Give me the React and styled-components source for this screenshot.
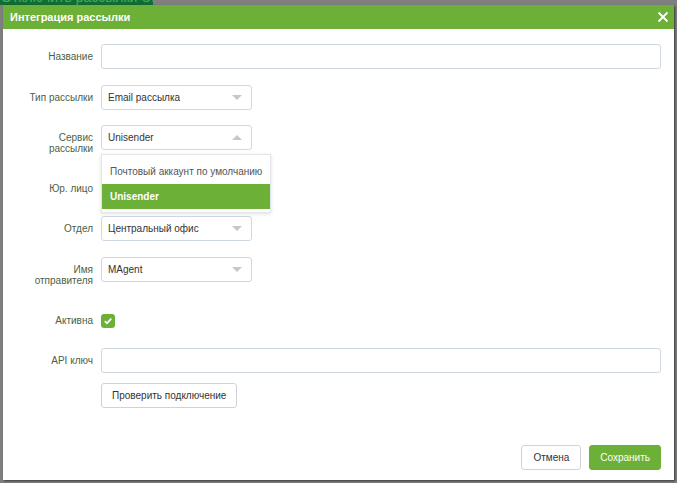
import React from "react";
import styled, { createGlobalStyle } from "styled-components";

const FONT = `"Liberation Sans", Arial, sans-serif`;

const Global = createGlobalStyle`
  html, body { margin: 0; padding: 0; }
  body {
    background: #7f7f7f;
    font-family: ${FONT};
    width: 677px;
    height: 483px;
    overflow: hidden;
  }
`;

const Page = styled.div`
  position: relative;
  width: 677px;
  height: 483px;
  background: #7f7f7f;
  overflow: hidden;
`;

const BackStrip = styled.div`
  width: 153px;
  height: 5px;
  background: #0e6e34;
  overflow: hidden;
  position: relative;
`;

const BackText = styled.span`
  display: block;
  margin-top: -10px;
  margin-left: 1px;
  font-size: 14px;
  line-height: 14px;
  color: #4fa85a;
  white-space: nowrap;
`;

const Modal = styled.div`
  position: absolute;
  left: 3px;
  top: 5px;
  width: 671px;
  height: 475px;
  background: #fff;
  display: flex;
  flex-direction: column;
  box-shadow: 1px 1px 2px rgba(0, 0, 0, 0.55);
`;

const Header = styled.div`
  height: 24px;
  background: #6cb037;
  display: flex;
  align-items: center;
  justify-content: space-between;
  padding: 0 5px 0 7px;
  flex-shrink: 0;
`;

const Title = styled.div`
  color: #fff;
  font-weight: bold;
  font-size: 11px;
`;

const Close = styled.button`
  border: 0;
  background: none;
  padding: 0;
  width: 12px;
  height: 12px;
  display: flex;
  cursor: pointer;
`;

const Body = styled.div`
  flex: 1;
  padding: 15px 13px 0 8px;
  display: flex;
  flex-direction: column;
`;

const Row = styled.div`
  display: grid;
  grid-template-columns: 82px 1fr;
  column-gap: 8px;
  height: 25px;
  margin-bottom: ${(p) => p.$space}px;
  position: relative;
  z-index: ${(p) => (p.$top ? 5 : 1)};
`;

const Label = styled.div`
  color: #4d6145;
  font-size: 10px;
  line-height: 11px;
  text-align: right;
  padding-top: 7px;
  white-space: pre-line;
`;

const Input = styled.div`
  height: 25px;
  box-sizing: border-box;
  border: 1px solid #cfd8e1;
  border-radius: 3px;
  background: #fff;
`;

const SelectWrap = styled.div`
  position: relative;
  width: 151px;
`;

const Select = styled.div`
  height: 25px;
  box-sizing: border-box;
  border: 1px solid #cfd8e1;
  border-radius: 3px;
  background: #fff;
  display: flex;
  align-items: center;
  justify-content: space-between;
  padding: 0 9px 0 6px;
  font-size: 10px;
  color: #333;
`;

const Arrow = styled.span`
  width: 0;
  height: 0;
  border-left: 5px solid transparent;
  border-right: 5px solid transparent;
  ${(p) =>
    p.$up
      ? "border-bottom: 5px solid #c4c8cc;"
      : "border-top: 5px solid #c4c8cc;"}
`;

const Dropdown = styled.div`
  position: absolute;
  left: 0;
  top: 29px;
  width: 170px;
  box-sizing: border-box;
  background: #fff;
  border: 1px solid #e2e6ea;
  box-shadow: 0 1px 4px rgba(0, 0, 0, 0.12);
  padding: 4px 0 3px;
`;

const Option = styled.div`
  height: 25px;
  display: flex;
  align-items: center;
  padding-left: 8px;
  font-size: 10px;
  white-space: nowrap;
  color: ${(p) => (p.$active ? "#fff" : "#555")};
  background: ${(p) => (p.$active ? "#6cb037" : "#fff")};
  font-weight: ${(p) => (p.$active ? "bold" : "normal")};
`;

const CheckCell = styled.div`
  display: flex;
  align-items: center;
`;

const Check = styled.span`
  width: 14px;
  height: 14px;
  border-radius: 3px;
  background: #6cb037;
  display: flex;
  align-items: center;
  justify-content: center;
`;

const Button = styled.button`
  height: 25px;
  box-sizing: border-box;
  padding: 0 ${(p) => p.$px || 11}px;
  border-radius: 3px;
  font-family: ${FONT};
  font-size: 10px;
  cursor: pointer;
  border: 1px solid ${(p) => (p.$primary ? "#6cb037" : "#cfd3d7")};
  background: ${(p) => (p.$primary ? "#6cb037" : "#fff")};
  color: ${(p) => (p.$primary ? "#fff" : "#333")};
`;

const ButtonCell = styled.div`
  display: flex;
`;

const Footer = styled.div`
  display: flex;
  justify-content: flex-end;
  gap: 8px;
  padding: 0 13px 10px 0;
`;

const Field = ({ label, space, top, children }) => (
  <Row $space={space} $top={top}>
    <Label>{label}</Label>
    {children}
  </Row>
);

const SelectBox = ({ value, open, children }) => (
  <SelectWrap>
    <Select>
      <span>{value}</span>
      <Arrow $up={open} />
    </Select>
    {children}
  </SelectWrap>
);

export default function App() {
  return (
    <Page>
      <Global />
      <BackStrip>
        <BackText>Отключить рассылки Unisender</BackText>
      </BackStrip>
      <Modal>
        <Header>
          <Title>Интеграция рассылки</Title>
          <Close aria-label="Закрыть">
            <svg width="12" height="12" viewBox="0 0 12 12">
              <path d="M1.5 1.5 L10.5 10.5 M10.5 1.5 L1.5 10.5" stroke="#fff" strokeWidth="1.8" />
            </svg>
          </Close>
        </Header>
        <Body>
          <Field label="Название" space={16}>
            <Input />
          </Field>
          <Field label="Тип рассылки" space={15}>
            <SelectBox value="Email рассылка" />
          </Field>
          <Field label={"Сервис\nрассылки"} space={26} top>
            <SelectBox value="Unisender" open>
              <Dropdown>
                <Option>Почтовый аккаунт по умолчанию</Option>
                <Option $active>Unisender</Option>
              </Dropdown>
            </SelectBox>
          </Field>
          <Field label="Юр. лицо" space={15}>
            <SelectBox value="" />
          </Field>
          <Field label="Отдел" space={16}>
            <SelectBox value="Центральный офис" />
          </Field>
          <Field label={"Имя\nотправителя"} space={26}>
            <SelectBox value="MAgent" />
          </Field>
          <Field label="Активна" space={15}>
            <CheckCell>
              <Check>
                <svg width="10" height="10" viewBox="0 0 10 10">
                  <path d="M1.8 5.2 L4 7.3 L8.3 2.6" fill="none" stroke="#fff" strokeWidth="1.7" />
                </svg>
              </Check>
            </CheckCell>
          </Field>
          <Field label="API ключ" space={10}>
            <Input />
          </Field>
          <Field label="" space={0}>
            <ButtonCell>
              <Button $px={10}>Проверить подключение</Button>
            </ButtonCell>
          </Field>
        </Body>
        <Footer>
          <Button $px={11}>Отмена</Button>
          <Button $primary $px={10}>Сохранить</Button>
        </Footer>
      </Modal>
    </Page>
  );
}
